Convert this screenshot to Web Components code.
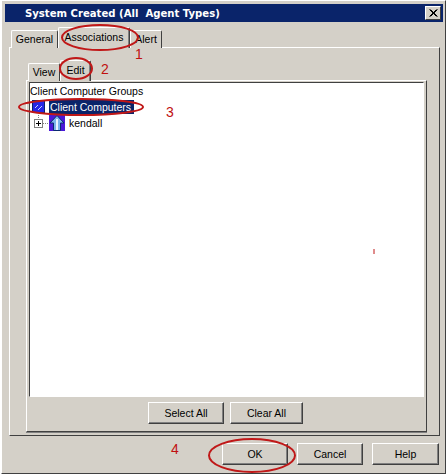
<!DOCTYPE html>
<html>
<head>
<meta charset="utf-8">
<title>System Created</title>
<style>
    html, body { margin: 0; padding: 0; background: #fff; }
    body { width: 446px; height: 474px; overflow: hidden; font: 10.5px "Liberation Sans", Arial, sans-serif; color: #000; }
</style>
</head>
<body>

<dlg-window heading="System Created (All  Agent Types)">
    <tab-strip slot="tabs" tabs="General:47,Associations:72,Alert:32" active="1" style="--tab-left: 2px"></tab-strip>
    <raised-panel slot="body" class="outer">
        <tab-strip tabs="View:32,Edit:31" active="1" style="--tab-left: 2px"></tab-strip>
        <raised-panel style="height: 352px">
            <tree-box>
                <div slot="head">Client Computer Groups</div>
                <tree-row selected icon="group">Client Computers</tree-row>
                <tree-row expander icon="arrow">kendall</tree-row>
            </tree-box>
            <btn-row style="--row-gap: 6px; --row-pad: 5px 0 0 121px">
                <win-button style="--w: 76px">Select All</win-button>
                <win-button style="--w: 73px">Clear All</win-button>
            </btn-row>
        </raised-panel>
    </raised-panel>
    <btn-row slot="footer" style="--row-gap: 9px; --row-pad: 0">
        <win-button style="--w: 66px">OK</win-button>
        <win-button style="--w: 66px">Cancel</win-button>
        <win-button style="--w: 67px">Help</win-button>
    </btn-row>
    <red-marks slot="marks"></red-marks>
</dlg-window>

<script>
const windowTemplate = document.createElement ("template");
windowTemplate.innerHTML = `
<style>
    :host {
        display: block;
        position: relative;
        box-sizing: border-box;
        width: 445px;
        height: 474px;
        margin-left: 1px;
        padding: 3px 2px 1px 3px;
        background: #d4d0c8;
        border-top: 1px solid #fff;
        border-left: 1px solid #fff;
        border-right: 1px solid #404040;
        border-bottom: 1px solid #404040;
    }
    #title {
        display: flex;
        align-items: center;
        justify-content: space-between;
        height: 18px;
        padding: 0 2px 0 20px;
        background: #0a246a;
        color: #fff;
        font: bold 10.1px "DejaVu Sans", sans-serif;
        white-space: pre;
    }
    #close {
        box-sizing: border-box;
        width: 16px;
        height: 14px;
        background: #d4d0c8;
        border: 1px solid;
        border-color: #fff #404040 #404040 #fff;
        display: flex;
    }
    #tabs { padding: 5px 0 0 4px; }
    #body { margin: 0 3px 0 4px; }
    #footer { display: flex; justify-content: flex-end; padding: 7px 4px 0 0; }
</style>
<div id="title">
    <span id="heading"></span>
    <span id="close"><svg width="14" height="12" viewBox="0 0 14 12"><path d="M3.500 2.500l7 7M4.500 2.500l7 7M10.500 2.500l-7 7M11.500 2.500l-7 7" stroke="#000" fill="none"/></svg></span>
</div>
<div id="tabs"><slot name="tabs"></slot></div>
<div id="body"><slot name="body"></slot></div>
<div id="footer"><slot name="footer"></slot></div>
<slot name="marks"></slot>
`;

class DlgWindow extends HTMLElement {
    constructor () {
        super ();
        this.attachShadow ({mode: "open"});
        this.shadowRoot.appendChild (windowTemplate.content.cloneNode (true));
        this.shadowRoot.querySelector ("#heading").textContent = this.getAttribute ("heading");
    }
}

class TabStrip extends HTMLElement {
    constructor () {
        super ();
        this.attachShadow ({mode: "open"});
        const tabs = this.getAttribute ("tabs").split (",").map (t => t.split (":"));
        const active = Number (this.getAttribute ("active"));
        this.shadowRoot.innerHTML = `
<style>
    :host { display: flex; align-items: flex-end; height: 21px; padding-left: var(--tab-left, 0); position: relative; z-index: 1; margin-bottom: -1px; }
    span {
        display: block;
        box-sizing: border-box;
        height: 18px;
        padding-top: 2px;
        text-align: center;
        background: #d4d0c8;
        border: 1px solid;
        border-color: #fff #404040 transparent #fff;
        border-bottom: 0;
        border-radius: 2px 2px 0 0;
        white-space: nowrap;
    }
    span.on { height: 21px; padding-top: 3px; box-shadow: inset -1px 0 0 #808080; }
</style>
` + tabs.map ((t, i) => `<span class="${i == active ? "on" : ""}" style="width: ${t[1]}px">${t[0]}</span>`).join ("");
    }
}

const panelTemplate = document.createElement ("template");
panelTemplate.innerHTML = `
<style>
    :host {
        display: block;
        box-sizing: border-box;
        background: #d4d0c8;
        border: 1px solid;
        border-color: #fff #404040 #404040 #fff;
        box-shadow: 0 1px 0 #808080;
    }
    :host(.outer) {
        height: 389px;
        padding: 12px 12px 2px 16px;
        box-shadow: none;
    }
</style>
<slot></slot>
`;

class RaisedPanel extends HTMLElement {
    constructor () {
        super ();
        this.attachShadow ({mode: "open"});
        this.shadowRoot.appendChild (panelTemplate.content.cloneNode (true));
    }
}

const treeTemplate = document.createElement ("template");
treeTemplate.innerHTML = `
<style>
    :host {
        display: block;
        box-sizing: border-box;
        height: 315px;
        margin: 1px 2px 0 2px;
        padding: 2px 0;
        background: #fff;
        border: 1px solid;
        border-color: #404040 #fff #fff #404040;
    }
    ::slotted([slot=head]) { height: 13px; line-height: 13px; margin-bottom: 2px; }
</style>
<slot name="head"></slot>
<slot></slot>
`;

class TreeBox extends HTMLElement {
    constructor () {
        super ();
        this.attachShadow ({mode: "open"});
        this.shadowRoot.appendChild (treeTemplate.content.cloneNode (true));
    }
}

const ICONS = {
    group: `<svg width="13" height="13" viewBox="0 0 13 13" style="display:block"><rect width="13" height="13" fill="#0a246a"/><rect x="1" y="1" width="11" height="11" fill="#2626e6"/><path d="M3 8l3-3M6 10l4-4" stroke="#c8d0ff"/></svg>`,
    arrow: `<svg width="16" height="16" viewBox="0 0 16 16" style="display:block"><rect width="16" height="16" fill="#4a18d8"/><path d="M8 .500L1 8h3.500v7.500h7V8H15z" fill="#7ab4ec" stroke="#0a2a70"/><path d="M8 4v11" stroke="#e8f2ff" stroke-width="2"/></svg>`
};

class TreeRow extends HTMLElement {
    constructor () {
        super ();
        this.attachShadow ({mode: "open"});
        const icon = ICONS[this.getAttribute ("icon")];
        const exp = this.hasAttribute ("expander");
        this.shadowRoot.innerHTML = `
<style>
    :host { display: flex; align-items: flex-start; padding-left: 2px; white-space: nowrap; }
    :host([selected]) { height: 15px; }
    :host([expander]) { height: 16px; }
    #exp { flex: none; height: 16px; display: ${exp ? "block" : "none"}; }
    #icon { flex: none; margin-right: 3px; }
    :host([selected]) #icon { margin-right: 4px; }
    #label { padding: 1px; line-height: 12px; }
    :host([selected]) #label { background: #0a246a; color: #fff; padding-right: 3px; }
    :host([expander]) #label { padding-top: 2px; }
</style>
<span id="exp">${exp ? `<svg width="17" height="16" viewBox="0 0 17 16" style="display:block"><rect x="2.500" y="4.500" width="8" height="8" fill="#fff" stroke="#808080"/><path d="M4 8.500h5M6.500 6v5" stroke="#000"/><path d="M11 8.500h6M6.500 0v4" stroke="#808080" stroke-dasharray="1 1"/></svg>` : ""}</span>
<span id="icon">${icon}</span>
<span id="label"><slot></slot></span>
`;
    }
}

class BtnRow extends HTMLElement {
    constructor () {
        super ();
        this.attachShadow ({mode: "open"});
        this.shadowRoot.innerHTML = `
<style>
    :host { display: flex; gap: var(--row-gap, 6px); padding: var(--row-pad, 0); }
</style>
<slot></slot>
`;
    }
}

class WinButton extends HTMLElement {
    constructor () {
        super ();
        this.attachShadow ({mode: "open"});
        this.shadowRoot.innerHTML = `
<style>
    :host {
        display: flex;
        align-items: center;
        justify-content: center;
        box-sizing: border-box;
        width: var(--w, 66px);
        height: 22px;
        background: #d4d0c8;
        border: 1px solid;
        border-color: #fff #404040 #404040 #fff;
        box-shadow: inset -1px -1px 0 #808080;
    }
</style>
<slot></slot>
`;
    }
}

class RedMarks extends HTMLElement {
    constructor () {
        super ();
        this.attachShadow ({mode: "open"});
        this.shadowRoot.innerHTML = `
<style>
    :host { position: absolute; left: -2px; top: -1px; width: 446px; height: 474px; pointer-events: none; z-index: 5; }
    svg { position: absolute; left: 0; top: 0; }
    span { position: absolute; color: #c01010; font: 14px "Liberation Sans", sans-serif; }
</style>
<svg width="446" height="474" fill="none" stroke="#c01818" stroke-width="2">
    <ellipse cx="100" cy="37.500" rx="38" ry="12.500"/>
    <ellipse cx="76" cy="68.500" rx="16" ry="10.500"/>
    <ellipse cx="81" cy="107" rx="62" ry="8"/>
    <ellipse cx="252" cy="455.500" rx="43" ry="16.500"/>
    <path d="M374 249v5" stroke-width="1"/>
</svg>
<span style="left:135px;top:46px">1</span>
<span style="left:101px;top:61px">2</span>
<span style="left:166px;top:104px">3</span>
<span style="left:171px;top:441px">4</span>
`;
    }
}

customElements.define ("dlg-window", DlgWindow);
customElements.define ("tab-strip", TabStrip);
customElements.define ("raised-panel", RaisedPanel);
customElements.define ("tree-box", TreeBox);
customElements.define ("tree-row", TreeRow);
customElements.define ("btn-row", BtnRow);
customElements.define ("win-button", WinButton);
customElements.define ("red-marks", RedMarks);
</script>
</body>
</html>
